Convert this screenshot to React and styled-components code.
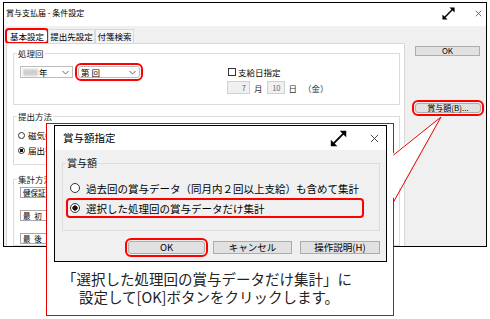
import React from 'react';
import styled, { createGlobalStyle, css } from 'styled-components';

const ui = `"Noto Sans CJK JP", "Noto Sans", sans-serif`;

const GlobalStyle = createGlobalStyle`
  html, body {
    margin: 0;
    padding: 0;
    background: #fff;
  }
  body {
    width: 490px;
    height: 319px;
    overflow: hidden;
    font-family: ${ui};
    color: #000;
  }
`;

// red rounded marker drawn around the parts the tutorial points at
const marked = css`
  ${({ $marked }) =>
    $marked &&
    css`
      outline: 2.5px solid #f00;
      outline-offset: 1px;
      border-radius: 3px;
    `}
`;

const Stage = styled.div`
  position: relative;
  width: 490px;
  height: 319px;
  padding: 2px 0 0 3px;
  box-sizing: border-box;
`;

/* ---------- main window ---------- */

const Window = styled.div`
  width: 484px;
  height: 245px;
  box-sizing: border-box;
  border: 1px solid #000;
  background: #f0f0f0;
  display: flex;
  flex-direction: column;
  overflow: hidden;
`;

const TitleBar = styled.div`
  height: 23px;
  flex: none;
  box-sizing: border-box;
  padding: 0 4px 3px 2px;
  background: #fff;
  display: flex;
  align-items: center;
  font-size: 8px;
`;

const TitleText = styled.span`
  line-height: 1;
  white-space: nowrap;
`;

const TitleTools = styled.div`
  margin-left: auto;
  display: flex;
  align-items: center;
  gap: ${({ $gap }) => $gap}px;
`;

const WinBody = styled.div`
  flex: 1;
  display: flex;
  min-height: 0;
`;

const MainColumn = styled.div`
  width: 401px;
  box-sizing: border-box;
  padding: 3px 0 0 2px;
  display: flex;
  flex-direction: column;
`;

const TabRow = styled.div`
  display: flex;
  height: 14px;
  flex: none;
`;

const Tab = styled.div`
  width: ${({ $w }) => $w}px;
  height: 14px;
  box-sizing: border-box;
  border: 1px solid #d9d9d9;
  border-bottom: none;
  background: ${({ $active }) => ($active ? '#fff' : '#f4f4f4')};
  font-size: 8.5px;
  line-height: 12px;
  text-align: center;
  white-space: nowrap;
  ${marked}
  outline-offset: -1.5px;
`;

const TabPanel = styled.div`
  flex: 1;
  background: #fff;
  border: 1px solid #d9d9d9;
  border-bottom: none;
  padding: 4px 4px 0 6px;
  display: flex;
  flex-direction: column;
`;

const Group = styled.fieldset`
  margin: ${({ $top }) => $top || 0}px 0 0 0;
  padding: 0 3px ${({ $bottom }) => ($bottom == null ? 0 : $bottom)}px 3px;
  border: 1px solid #dcdcdc;
  min-width: 0;
  ${({ $grow }) => $grow && 'flex: 1;'}
`;

const GroupLabel = styled.legend`
  padding: 0 1px;
  font-size: 8.5px;
  line-height: 10px;
  color: #222;
`;

const Row = styled.div`
  display: flex;
  align-items: flex-start;
  padding-left: 3px;
`;

const Combo = styled.div`
  width: ${({ $w }) => $w}px;
  height: 12px;
  margin: 8px 0 0 ${({ $left }) => $left || 0}px;
  box-sizing: border-box;
  border: 1px solid #bcbcbc;
  background: #fff;
  display: flex;
  align-items: center;
  padding: 0 3px 0 2px;
  font-size: 8.5px;
  white-space: nowrap;
  ${marked}
`;

const Blur = styled.span`
  display: inline-block;
  width: 15px;
  height: 7px;
  margin-right: 1px;
  background: #cfcfcf;
  filter: blur(1.2px);
`;

const Chevron = styled.svg`
  margin-left: auto;
  flex: none;
`;

const DateColumn = styled.div`
  margin: 9px 0 0 87px;
  display: flex;
  flex-direction: column;
  gap: 4px;
`;

const CheckRow = styled.div`
  display: flex;
  align-items: center;
  height: 10px;
  font-size: 8.5px;
  white-space: nowrap;
`;

const CheckBox = styled.span`
  width: 8px;
  height: 8px;
  margin: 0 2px 0 1px;
  box-sizing: border-box;
  border: 1px solid #333;
  background: #fff;
`;

const DateRow = styled.div`
  display: flex;
  align-items: center;
  height: 13px;
  font-size: 8.5px;
  white-space: nowrap;
`;

const DateBox = styled.span`
  width: ${({ $w }) => $w}px;
  height: 13px;
  box-sizing: border-box;
  border: 1px solid #d0d0d0;
  background: #f0f0f0;
  color: #6d6d6d;
  font-size: 7.5px;
  line-height: 11px;
  text-align: right;
  padding-right: 3px;
`;

const Unit = styled.span`
  margin: 0 ${({ $right }) => ($right == null ? 4 : $right)}px 0 ${({ $left }) => ($left == null ? 4 : $left)}px;
  color: #333;
`;

const SmallRadioRow = styled.div`
  display: flex;
  align-items: center;
  height: 10px;
  margin-top: ${({ $top }) => $top}px;
  padding-left: 1px;
  font-size: 8.5px;
  white-space: nowrap;
`;

const SmallRadio = styled.span`
  width: 7px;
  height: 7px;
  margin-right: 3px;
  box-sizing: border-box;
  border: 1px solid #333;
  border-radius: 50%;
  background: ${({ $on }) => ($on ? 'radial-gradient(circle, #111 0 1.6px, #fff 2px)' : '#fff')};
`;

const FieldBox = styled.div`
  width: 80px;
  height: 11px;
  margin: ${({ $top }) => $top}px 0 0 3px;
  box-sizing: border-box;
  border: 1px solid #a8a8a8;
  background: #fff;
  padding-left: 2px;
  font-size: 7.5px;
  line-height: 9px;
  letter-spacing: ${({ $spaced }) => ($spaced ? '1px' : '0')};
  white-space: nowrap;
`;

const SideColumn = styled.div`
  flex: 1;
  padding: 0 0 0 10px;
  display: flex;
  flex-direction: column;
  align-items: flex-start;
`;

const SideButton = styled.div`
  width: ${({ $w }) => $w}px;
  height: ${({ $h }) => $h || 10}px;
  margin-top: ${({ $top }) => $top}px;
  box-sizing: border-box;
  border: 1px solid #adadad;
  background: #e1e1e1;
  font-size: 8px;
  line-height: ${({ $h }) => ($h || 10) - 2}px;
  text-align: center;
  white-space: nowrap;
  ${marked}
`;

/* ---------- callout with the sub dialog ---------- */

const Callout = styled.div`
  position: absolute;
  left: 46px;
  top: 123px;
  width: 348px;
  height: 193px;
  box-sizing: border-box;
  border: 1px solid #e60000;
  background: #fff;
  padding: 1px 0 0 7px;
`;

const Dialog = styled.div`
  width: 333px;
  height: 137px;
  box-sizing: border-box;
  border: 1px solid #000;
  background: #f0f0f0;
  display: flex;
  flex-direction: column;
`;

const DlgTitleBar = styled.div`
  height: 24px;
  flex: none;
  background: #fff;
  display: flex;
  align-items: center;
  padding: 0 7px 0 8px;
  font-size: 10.5px;
`;

const DlgBody = styled.div`
  flex: 1;
  padding: 7px 6px 0 7px;
  display: flex;
  flex-direction: column;
`;

const DlgGroup = styled.fieldset`
  margin: 0;
  padding: 0 3px 12px 3px;
  border: 1px solid #dcdcdc;
  min-width: 0;
`;

const DlgLegend = styled.legend`
  padding: 0 1px;
  font-size: 10px;
  line-height: 12px;
  color: #111;
`;

const OptionRow = styled.div`
  display: flex;
  align-items: center;
  width: 298px;
  height: ${({ $h }) => $h}px;
  margin-top: ${({ $top }) => $top}px;
  box-sizing: border-box;
  padding-left: 4px;
  font-size: 10.5px;
  white-space: nowrap;
  ${({ $marked }) =>
    $marked &&
    css`
      outline: 2.5px solid #f00;
      outline-offset: -2.5px;
      border-radius: 4px;
    `}
`;

const Radio = styled.span`
  width: 10px;
  height: 10px;
  flex: none;
  margin-right: 6px;
  box-sizing: border-box;
  border: 1px solid #333;
  border-radius: 50%;
  background: ${({ $on }) => ($on ? 'radial-gradient(circle, #111 0 2.4px, #fff 2.9px)' : '#fff')};
`;

const DlgButtons = styled.div`
  display: flex;
  justify-content: flex-end;
  gap: 8px;
  margin-top: 10px;
`;

const DlgButton = styled.div`
  width: ${({ $w }) => $w}px;
  height: 13px;
  box-sizing: border-box;
  border: 1px solid #adadad;
  background: #e1e1e1;
  font-size: 9.5px;
  line-height: 11px;
  text-align: center;
  white-space: nowrap;
  ${marked}
  outline-offset: 1.5px;
`;

const Caption = styled.div`
  margin-top: 8px;
  padding-left: 8px;
  font-size: 14.5px;
  line-height: 18px;
  color: #222;
  white-space: nowrap;
`;

const CaptionLine = styled.div`
  padding-left: ${({ $indent }) => $indent || 0}px;
`;

const Pointer = styled.svg`
  position: absolute;
  left: 0;
  top: 0;
  pointer-events: none;
`;

/* ---------- small drawings ---------- */

function ResizeIcon({ size }) {
  return (
    <svg width={size} height={size} viewBox="0 0 16 16">
      <line x1="3.5" y1="12.5" x2="12.5" y2="3.5" stroke="#000" strokeWidth="1.6" />
      <polygon points="9,1.5 14.5,1.5 14.5,7" fill="#000" />
      <polygon points="1.5,9 1.5,14.5 7,14.5" fill="#000" />
    </svg>
  );
}

function CloseIcon({ size }) {
  return (
    <svg width={size} height={size} viewBox="0 0 10 10">
      <path d="M1 1 L9 9 M9 1 L1 9" stroke="#333" strokeWidth="1" fill="none" />
    </svg>
  );
}

function ComboArrow() {
  return (
    <Chevron width="7" height="5" viewBox="0 0 7 5">
      <polyline points="0.5,1 3.5,4 6.5,1" fill="none" stroke="#555" strokeWidth="0.9" />
    </Chevron>
  );
}

export default function App() {
  return (
    <Stage>
      <GlobalStyle />
      <Window>
        <TitleBar>
          <TitleText>賞与支払届 - 条件設定</TitleText>
          <TitleTools $gap={19}>
            <ResizeIcon size={15} />
            <CloseIcon size={7} />
          </TitleTools>
        </TitleBar>
        <WinBody>
          <MainColumn>
            <TabRow>
              <Tab $w={42} $active $marked>基本設定</Tab>
              <Tab $w={47}>提出先設定</Tab>
              <Tab $w={39}>付箋検索</Tab>
            </TabRow>
            <TabPanel>
              <Group $bottom={10}>
                <GroupLabel>処理回</GroupLabel>
                <Row>
                  <Combo $w={53}>
                    <Blur />年<ComboArrow />
                  </Combo>
                  <Combo $w={62} $left={5} $marked>
                    第 回<ComboArrow />
                  </Combo>
                  <DateColumn>
                    <CheckRow>
                      <CheckBox />支給日指定
                    </CheckRow>
                    <DateRow>
                      <DateBox $w={23}>7</DateBox>
                      <Unit>月</Unit>
                      <DateBox $w={18}>10</DateBox>
                      <Unit>日</Unit>
                      <Unit $left={2}>（金）</Unit>
                    </DateRow>
                  </DateColumn>
                </Row>
              </Group>
              <Group $top={6} $bottom={9}>
                <GroupLabel>提出方法</GroupLabel>
                <SmallRadioRow $top={9}>
                  <SmallRadio />磁気媒体
                </SmallRadioRow>
                <SmallRadioRow $top={5}>
                  <SmallRadio $on />届出書
                </SmallRadioRow>
              </Group>
              <Group $top={9} $grow>
                <GroupLabel>集計方法</GroupLabel>
                <FieldBox $top={3}>健保証番号順</FieldBox>
                <FieldBox $top={12} $spaced>最 初</FieldBox>
                <FieldBox $top={12} $spaced>最 後</FieldBox>
              </Group>
            </TabPanel>
          </MainColumn>
          <SideColumn>
            <SideButton $w={65} $top={20}>OK</SideButton>
            <SideButton $w={66} $top={47} $marked>賞与額(B)...</SideButton>
          </SideColumn>
        </WinBody>
      </Window>

      <Callout>
        <Dialog>
          <DlgTitleBar>
            <TitleText>賞与額指定</TitleText>
            <TitleTools $gap={22}>
              <ResizeIcon size={19} />
              <CloseIcon size={9} />
            </TitleTools>
          </DlgTitleBar>
          <DlgBody>
            <DlgGroup>
              <DlgLegend>賞与額</DlgLegend>
              <OptionRow $h={16} $top={11}>
                <Radio />過去回の賞与データ（同月内２回以上支給）も含めて集計
              </OptionRow>
              <OptionRow $h={20} $top={2} $marked>
                <Radio $on />選択した処理回の賞与データだけ集計
              </OptionRow>
            </DlgGroup>
            <DlgButtons>
              <DlgButton $w={77} $marked>OK</DlgButton>
              <DlgButton $w={79}>キャンセル</DlgButton>
              <DlgButton $w={80}>操作説明(H)</DlgButton>
            </DlgButtons>
          </DlgBody>
        </Dialog>
        <Caption>
          <CaptionLine>「選択した処理回の賞与データだけ集計」に</CaptionLine>
          <CaptionLine $indent={17}>設定して[OK]ボタンをクリックします。</CaptionLine>
        </Caption>
      </Callout>

      <Pointer width="490" height="319" viewBox="0 0 490 319">
        <polygon points="391,155 441,117 391,202" fill="#fff" />
        <polyline points="393.5,155 441,117 393.5,202" fill="none" stroke="#e60000" strokeWidth="1" />
      </Pointer>
    </Stage>
  );
}
